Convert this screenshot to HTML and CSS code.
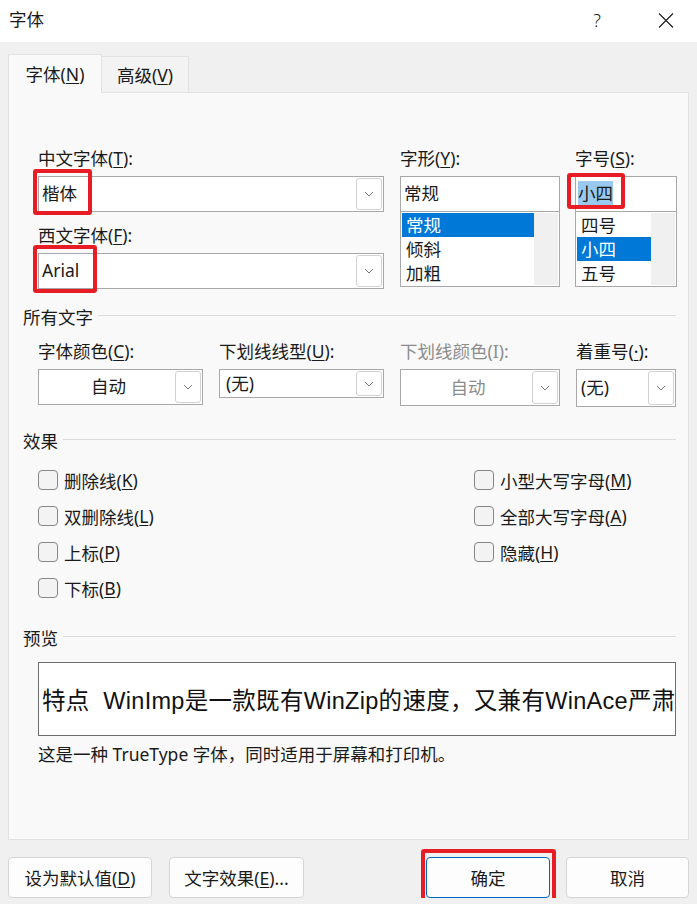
FILE: index.html
```html
<!DOCTYPE html>
<html lang="zh-CN">
<head>
  <meta charset="UTF-8">
  <title>字体</title>
  <link rel="stylesheet" href="styles.css">
</head>
<body>
  <div class="titlebar">
    <div class="title">字体</div>
    <div class="help">?</div>
    <div class="close">
      <svg width="16" height="15" viewBox="0 0 16 15"><path d="M1 0.5L15 14.5M15 0.5L1 14.5" stroke="#1c1c1c" stroke-width="1.1" fill="none"/></svg>
    </div>
  </div>

  <div class="tabs">
    <div class="tab active">字体(<u>N</u>)</div>
    <div class="tab">高级(<u>V</u>)</div>
  </div>

  <div class="panel">
    <div class="font-grid">
      <div class="col">
        <div class="label">中文字体(<u>T</u>):</div>
        <div class="combo tall">
          <span class="value">楷体</span>
          <span class="drop"><svg width="10" height="6" viewBox="0 0 10 6"><path d="M1 1l4 4 4-4" fill="none" stroke="#7a7a7a"/></svg></span>
          <span class="mark mark-kai"></span>
        </div>
        <div class="label second">西文字体(<u>F</u>):</div>
        <div class="combo tall">
          <span class="value">Arial</span>
          <span class="drop"><svg width="10" height="6" viewBox="0 0 10 6"><path d="M1 1l4 4 4-4" fill="none" stroke="#7a7a7a"/></svg></span>
          <span class="mark mark-arial"></span>
        </div>
      </div>
      <div class="col">
        <div class="label">字形(<u>Y</u>):</div>
        <div class="field">常规</div>
        <div class="listbox">
          <div class="items">
            <div class="item sel">常规</div>
            <div class="item">倾斜</div>
            <div class="item">加粗</div>
          </div>
          <div class="track"></div>
        </div>
      </div>
      <div class="col">
        <div class="label">字号(<u>S</u>):</div>
        <div class="field size"><span class="selected">小四</span><span class="mark mark-size"></span></div>
        <div class="listbox">
          <div class="items">
            <div class="item">四号</div>
            <div class="item sel">小四</div>
            <div class="item">五号</div>
          </div>
          <div class="track"></div>
        </div>
      </div>
    </div>

    <div class="section first"><span>所有文字</span></div>
    <div class="all-grid">
      <div class="label">字体颜色(<u>C</u>):</div>
      <div class="label">下划线线型(<u>U</u>):</div>
      <div class="label disabled">下划线颜色(I):</div>
      <div class="label">着重号(<u>·</u>):</div>

      <div class="combo c-color">
        <span class="value center">自动</span>
        <span class="drop"><svg width="10" height="6" viewBox="0 0 10 6"><path d="M1 1l4 4 4-4" fill="none" stroke="#7a7a7a"/></svg></span>
      </div>
      <div class="combo c-under">
        <span class="value pad6">(无)</span>
        <span class="drop"><svg width="10" height="6" viewBox="0 0 10 6"><path d="M1 1l4 4 4-4" fill="none" stroke="#7a7a7a"/></svg></span>
      </div>
      <div class="combo c-ucolor">
        <span class="value center dim">自动</span>
        <span class="drop"><svg width="10" height="6" viewBox="0 0 10 6"><path d="M1 1l4 4 4-4" fill="none" stroke="#7a7a7a"/></svg></span>
      </div>
      <div class="combo c-emph">
        <span class="value pad4">(无)</span>
        <span class="drop"><svg width="10" height="6" viewBox="0 0 10 6"><path d="M1 1l4 4 4-4" fill="none" stroke="#7a7a7a"/></svg></span>
      </div>
    </div>

    <div class="section effects"><span>效果</span></div>
    <div class="checks">
      <div class="check"><span class="box"></span>删除线(<u>K</u>)</div>
      <div class="check"><span class="box"></span>小型大写字母(<u>M</u>)</div>
      <div class="check"><span class="box"></span>双删除线(<u>L</u>)</div>
      <div class="check"><span class="box"></span>全部大写字母(<u>A</u>)</div>
      <div class="check"><span class="box"></span>上标(<u>P</u>)</div>
      <div class="check"><span class="box"></span>隐藏(<u>H</u>)</div>
      <div class="check"><span class="box"></span>下标(<u>B</u>)</div>
    </div>

    <div class="section preview-head"><span>预览</span></div>
    <div class="preview">特点  WinImp是一款既有WinZip的速度，又兼有WinAce严肃</div>
    <div class="note">这是一种 TrueType 字体，同时适用于屏幕和打印机。</div>
  </div>

  <div class="buttons">
    <button class="btn b-default">设为默认值(<u>D</u>)</button>
    <button class="btn b-effects">文字效果(<u>E</u>)...</button>
    <span class="marked">
      <button class="btn b-ok">确定</button>
      <span class="mark mark-ok"></span>
    </span>
    <button class="btn b-cancel">取消</button>
  </div>
</body>
</html>
```

FILE: styles.css
```css
* { margin: 0; padding: 0; box-sizing: border-box; }

body {
  background: #f0f0f0;
  font-family: "Noto Sans", "Noto Sans CJK SC", sans-serif;
  font-size: 17.5px;
  color: #1a1a1a;
  overflow: hidden;
}

u { text-decoration: underline; text-underline-offset: 2px; text-decoration-thickness: 1px; }

/* title bar */
.titlebar {
  height: 42px;
  background: #fff;
  display: flex;
  align-items: center;
  padding-left: 9px;
}
.title { flex: 1; line-height: 1; margin-top: -2px; }
.help { width: 46px; text-align: center; font-weight: 300; font-size: 18px; margin-top: -2px; }
.close { width: 46px; margin: 0 8px 0 23px; display: flex; justify-content: center; margin-top: -2px; }

/* tabs */
.tabs {
  height: 50px;
  display: flex;
  align-items: flex-end;
  padding-left: 8px;
}
.tab {
  height: 36px;
  width: 87px;
  display: flex;
  align-items: center;
  justify-content: center;
  background: #f3f3f3;
  border: 1px solid #e2e2e2;
  border-bottom: none;
  border-left: none;
}
.tab.active {
  width: 94px;
  height: 39px;
  margin-bottom: -1px;
  background: #f9f9f9;
  border-left: 1px solid #e2e2e2;
  position: relative;
  z-index: 1;
  padding-bottom: 1px;
}

/* main panel */
.panel {
  margin: 0 8px;
  height: 748px;
  background: #f9f9f9;
  border: 1px solid #e2e2e2;
  padding: 53px 12px 0 14px;
}

.label { height: 24px; line-height: 24px; white-space: nowrap; }
.label.disabled { color: #8c8c8c; }

.font-grid {
  display: grid;
  grid-template-columns: 346px 160px 101px;
  column-gap: 16px;
  padding-left: 15px;
}
.font-grid .col:last-child { margin-left: -1px; }
.font-grid .col > .label + * { margin-top: 6px; }
.font-grid .label.second { margin-top: 11px; }

.combo {
  position: relative;
  display: flex;
  height: 36px;
  background: #fff;
  border: 1px solid #a8a8a8;
}
.value { flex: 1; padding: 0 0 3px 3px; display: flex; align-items: center; white-space: nowrap; }
.value.center { justify-content: center; }
.value.pad6 { padding-left: 6px; }
.value.pad4 { padding-left: 4px; }
.value.dim { color: #8c8c8c; }
.drop {
  width: 26px;
  margin: 1px 1px 1px 0;
  border: 1px solid #d2d2d2;
  border-radius: 3px;
  display: flex;
  align-items: center;
  justify-content: center;
}

.field {
  position: relative;
  height: 36px;
  background: #fff;
  border: 1px solid #a8a8a8;
  padding: 0 0 3px 3px;
  display: flex;
  align-items: center;
}
.field.size { padding: 0 0 1px 2px; }
.selected { background: #99c9ef; height: 25px; line-height: 25px; }

.listbox {
  display: flex;
  height: 76px;
  margin-top: -1px;
  background: #fff;
  border: 1px solid #a8a8a8;
  padding: 1px;
}
.items { flex: 1; }
.item { height: 24px; line-height: 24px; padding-left: 4px; }
.item.sel { background: #0078d7; color: #fff; }
.track { width: 24px; background: #f0f0f0; }

/* red annotation frames */
.mark {
  position: absolute;
  border: 4px solid #e81c24;
  border-radius: 3px;
  pointer-events: none;
}
.mark-kai { left: -6px; top: -8px; width: 59px; height: 46px; }
.mark-arial { left: -6px; top: -9px; width: 64px; height: 48px; }
.mark-size { left: -9px; top: -4px; width: 58px; height: 36px; }

/* section headings */
.section {
  display: flex;
  align-items: center;
  gap: 5px;
  height: 24px;
  line-height: 24px;
}
.section::after {
  content: "";
  flex: 1;
  border-top: 1px solid #dcdcdc;
  margin-top: -3px;
}
.section.first { margin-top: 16px; }
.section.effects { margin-top: 22px; }
.section.preview-head { margin-top: 20px; }

.all-grid {
  display: grid;
  grid-template-columns: 165px 165px 160px 100px;
  column-gap: 16px;
  align-items: start;
  padding-left: 15px;
  margin-top: 10px;
  row-gap: 6px;
}
.c-color { height: 36px; }
.c-under { height: 29px; }
.c-under .value { padding-bottom: 2px; }
.c-ucolor { height: 37px; }
.c-emph { height: 38px; }

/* checkboxes */
.checks {
  display: grid;
  grid-template-columns: 436px 1fr;
  padding-left: 15px;
  margin-top: 9px;
}
.check { display: flex; align-items: center; height: 36px; white-space: nowrap; }
.box {
  width: 20px;
  height: 20px;
  border: 1px solid #858585;
  border-radius: 4px;
  background: #f3f3f3;
  margin-right: 6px;
}

/* preview */
.preview {
  margin: 12px 0 0 15px;
  height: 74px;
  background: #fff;
  border: 1px solid #6e6e6e;
  display: flex;
  align-items: center;
  padding-left: 3px;
  overflow: hidden;
  white-space: pre;
  font-family: "Liberation Sans", "Noto Sans CJK SC", sans-serif;
  font-size: 23.5px;
  letter-spacing: 0.3px;
  color: #111;
}
.note { margin: 6px 0 0 15px; height: 24px; line-height: 24px; }

/* bottom buttons */
.buttons {
  display: flex;
  padding: 17px 8px 0 8px;
}
.btn {
  height: 41px;
  font: inherit;
  color: #1a1a1a;
  background: #fdfdfd;
  border: 1px solid #d5d5d5;
  border-radius: 4px;
}
.b-default { width: 144px; }
.b-effects { width: 135px; margin-left: 17px; }
.marked { position: relative; display: flex; margin-left: 122px; }
.b-ok { width: 124px; border-color: #0067c0; }
.mark-ok { left: -5px; top: -8px; right: -6px; bottom: -10px; }
.b-cancel { width: 123px; margin-left: 16px; }
```
